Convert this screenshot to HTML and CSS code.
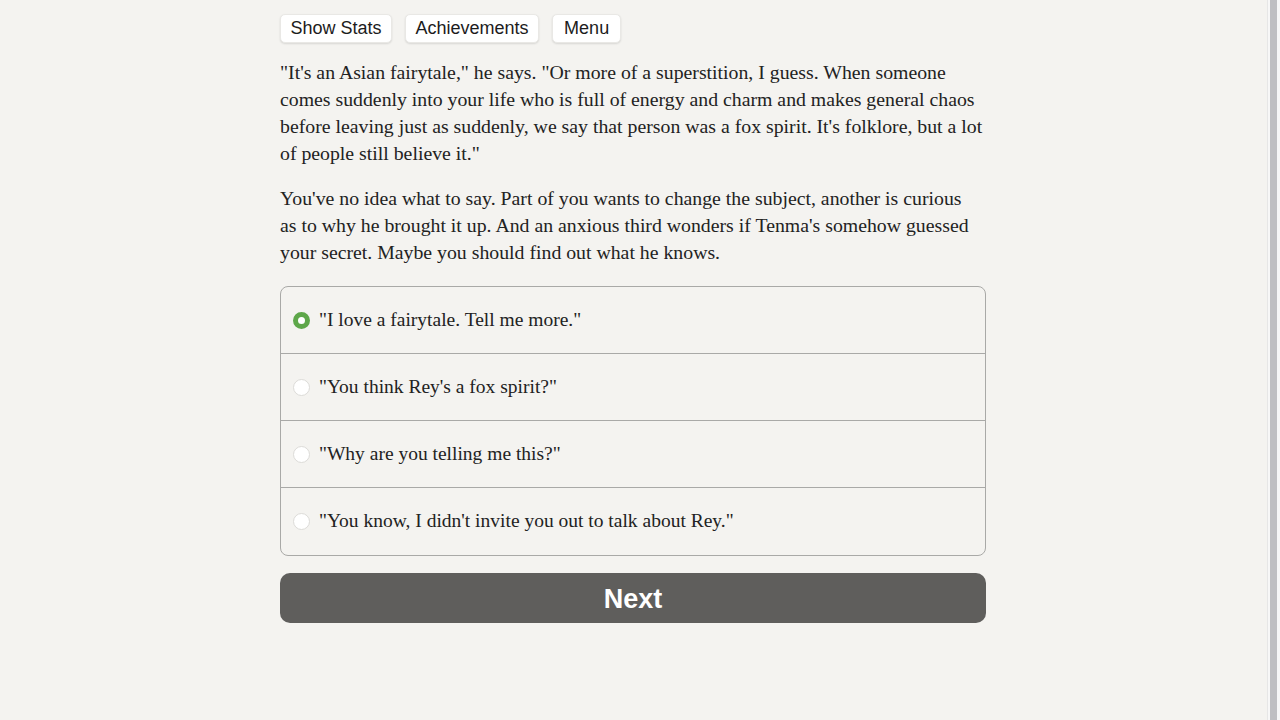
FILE: index.html
```html
<!DOCTYPE html>
<html lang="en">
<head>
<meta charset="utf-8">
<title>Story</title>
<link rel="stylesheet" href="styles.css">
</head>
<body>
<div class="page">
  <main class="column">
    <nav class="toolbar">
      <button class="tool-btn">Show Stats</button>
      <button class="tool-btn">Achievements</button>
      <button class="tool-btn">Menu</button>
    </nav>
    <p class="story">"It's an Asian fairytale," he says. "Or more of a superstition, I guess. When someone<br>comes suddenly into your life who is full of energy and charm and makes general chaos<br>before leaving just as suddenly, we say that person was a fox spirit. It's folklore, but a lot<br>of people still believe it."</p>
    <p class="story">You've no idea what to say. Part of you wants to change the subject, another is curious<br>as to why he brought it up. And an anxious third wonders if Tenma's somehow guessed<br>your secret. Maybe you should find out what he knows.</p>
    <form class="choices">
      <label class="choice"><span class="radio checked"></span><span class="choice-text">"I love a fairytale. Tell me more."</span></label>
      <label class="choice"><span class="radio"></span><span class="choice-text">"You think Rey's a fox spirit?"</span></label>
      <label class="choice"><span class="radio"></span><span class="choice-text">"Why are you telling me this?"</span></label>
      <label class="choice"><span class="radio"></span><span class="choice-text">"You know, I didn't invite you out to talk about Rey."</span></label>
    </form>
    <button class="next-btn">Next</button>
  </main>
</div>
<div class="scrollbar"><div class="scroll-thumb"></div></div>
</body>
</html>
```
FILE: styles.css
```css
html, body {
  margin: 0;
  padding: 0;
  background: #f4f3f0;
  height: 100%;
}
body {
  font-family: "Liberation Serif", "DejaVu Serif", serif;
  color: #222;
  overflow: hidden;
}
.page {
  padding-right: 14px;
}
.column {
  width: 706px;
  margin: 0 auto;
  padding-top: 14px;
}
.toolbar {
  display: flex;
  gap: 13px;
  margin-bottom: 16px;
}
.tool-btn {
  font-family: "Liberation Sans", Arial, sans-serif;
  font-size: 18px;
  color: #1c1c1c;
  background: #fff;
  border: 1px solid #e9e8e5;
  border-radius: 5px;
  box-shadow: 0 1px 2px rgba(0,0,0,0.12);
  height: 29px;
  padding: 0 9.5px;
  line-height: 27px;
}
.tool-btn:last-child {
  padding: 0 11px;
}
.story {
  font-size: 19.8px;
  line-height: 27px;
  margin: 0 0 18px;
  white-space: nowrap;
}
.choices {
  margin: 20px 0 17px;
  padding-bottom: 1px;
  border: 1px solid #a9a9a7;
  border-radius: 8px;
  display: flex;
  flex-direction: column;
}
.choice {
  height: 66px;
  display: flex;
  align-items: center;
  padding-left: 12px;
  gap: 9px;
  font-size: 19.5px;
  border-top: 1px solid #a9a9a7;
}
.choice:first-child {
  border-top: none;
}
.radio {
  width: 17px;
  height: 17px;
  border-radius: 50%;
  box-sizing: border-box;
  background: #fff;
  border: 1px solid #dcdbd8;
  flex: none;
}
.radio.checked {
  background: #fff;
  border: 5.5px solid #5ea74a;
}
.next-btn {
  display: block;
  width: 100%;
  height: 50px;
  padding: 2px 0 0;
  border: none;
  border-radius: 10px;
  background: #5f5e5c;
  color: #fff;
  font-family: "Liberation Sans", Arial, sans-serif;
  font-weight: bold;
  font-size: 27px;
}
.scrollbar {
  position: fixed;
  top: 0;
  right: 0;
  bottom: 0;
  width: 12px;
  background: #f7f7f7;
  border-left: 1px solid #e6e6e6;
}
.scroll-thumb {
  position: absolute;
  top: 0;
  bottom: 0;
  left: 2px;
  width: 7px;
  background: #bfbfc2;
}
```
